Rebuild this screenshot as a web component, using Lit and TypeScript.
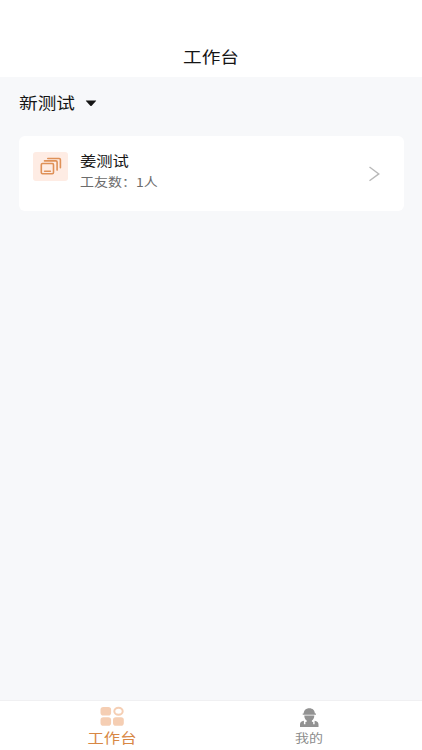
import { LitElement, html, css } from "lit";
import { customElement } from "lit/decorators.js";

@customElement("app-root")
export class AppRoot extends LitElement {
  static styles = css`
    :host {
      display: flex;
      flex-direction: column;
      height: 750px;
      box-sizing: border-box;
      background: #f7f8fa;
      color: #151515;
      font-family: "Noto Sans CJK SC", sans-serif;
    }
    svg {
      display: block;
    }
    .wide {
      display: inline-block;
      white-space: nowrap;
      transform: scaleX(1.165);
      transform-origin: left center;
    }
    .mid {
      transform-origin: center;
    }
    header {
      height: 77px;
      padding-top: 36px;
      box-sizing: border-box;
      background: #fff;
      text-align: center;
      font-size: 16px;
      line-height: 40px;
    }
    .picker {
      display: flex;
      align-items: center;
      gap: 18px;
      height: 52px;
      padding-left: 19px;
      font-size: 16px;
    }
    .picker .wide {
      padding-bottom: 2px;
    }
    .card {
      display: flex;
      align-items: flex-start;
      height: 75px;
      margin: 7px 18px 0 19px;
      padding: 15px 24px 0 14px;
      box-sizing: border-box;
      background: #fff;
      border-radius: 6px;
    }
    .thumb {
      width: 35px;
      height: 29px;
      margin-top: 1px;
      border-radius: 3px;
      background: #feece4;
    }
    .info {
      flex: 1;
      padding-left: 12px;
    }
    .name {
      margin-top: -1px;
      font-size: 14px;
      line-height: 20px;
    }
    .count {
      font-size: 12px;
      line-height: 20px;
      color: #6c6c6c;
      margin-top: 2px;
    }
    .arrow {
      margin-top: 15px;
    }
    nav {
      display: flex;
      height: 50px;
      margin-top: auto;
      box-sizing: border-box;
      border-top: 1px solid #f0f0f2;
      background: #fff;
    }
    .tab {
      flex: 1;
      display: flex;
      flex-direction: column;
      align-items: center;
      padding-top: 5px;
      color: #8c8c8c;
      font-size: 12px;
      line-height: 20px;
    }
    .home {
      padding-left: 13px;
      color: #d88744;
      font-size: 14px;
    }
    .mine {
      padding-right: 14px;
    }
    .mine .wide {
      margin-top: 1px;
    }
  `;

  render() {
    return html`
      <header><span class="wide mid">工作台</span></header>
      <div class="picker">
        <span class="wide">新测试</span>
        <svg width="12" height="7" viewBox="0 0 12 7">
          <path d="M1.2 .5h9.6q.7 0 .2.6L6.7 5.8q-.7.6-1.4 0L1 1.1Q.5.5 1.2.5z" fill="#151515" />
        </svg>
      </div>
      <section class="card">
        <svg class="thumb" viewBox="0 0 35 29" fill="none" stroke="#df9158" stroke-width="1.6" stroke-linejoin="round" stroke-linecap="round">
          <rect x="8.3" y="11.5" width="12.2" height="10.2" rx="1.2" />
          <path d="M11.6 19.3h5.8M11.5 8.9h11.4q1.200 0 1.200 1.200v8M14.800 6.500h11.400q1.200 0 1.200 1.200v8" />
        </svg>
        <div class="info">
          <div class="name"><span class="wide">姜测试</span></div>
          <div class="count"><span class="wide">工友数：1人</span></div>
        </div>
        <svg class="arrow" width="12" height="16" viewBox="0 0 12 16" fill="none" stroke="#b9b9b9" stroke-width="1.4">
          <path d="M1.5 1 10.8 7.9 1.5 14.8" />
        </svg>
      </section>
      <nav>
        <div class="tab home">
          <svg width="24" height="21" viewBox="0 0 24 21" fill="#f5ceb3">
            <rect x="0.5" y="1" width="10.6" height="8.6" rx="2.8" />
            <rect x="0.5" y="11.3" width="10.6" height="8.4" rx="2.8" />
            <rect x="13" y="11.3" width="10.8" height="8.4" rx="2.8" />
            <ellipse cx="18.5" cy="5.3" rx="4.2" ry="3.5" fill="none" stroke="#f5ceb3" stroke-width="2" />
          </svg>
          <span class="wide mid">工作台</span>
        </div>
        <div class="tab mine">
          <svg width="20" height="21" viewBox="0 0 20 21" fill="#929292">
            <path d="M4.700 7.600C4.700 4.300 6.900 2.200 10.300 2.200s5.600 2.100 5.600 5.400h1.100v1.200H3.700V7.600z" />
            <path d="M5.300 9.500h10c0 2.400-.9 4-2.400 5v1.300l1.300.3v3H6.400v-3l1.300-.3v-1.300C6.200 13.500 5.300 11.900 5.300 9.500z" />
            <path d="M1 21.200v-2.700c0-2 1.200-3.200 3.900-3.700v3.500h10.700v-3.500c2.700.5 3.900 1.700 3.900 3.700v2.700z" />
          </svg>
          <span class="wide mid">我的</span>
        </div>
      </nav>
    `;
  }
}
